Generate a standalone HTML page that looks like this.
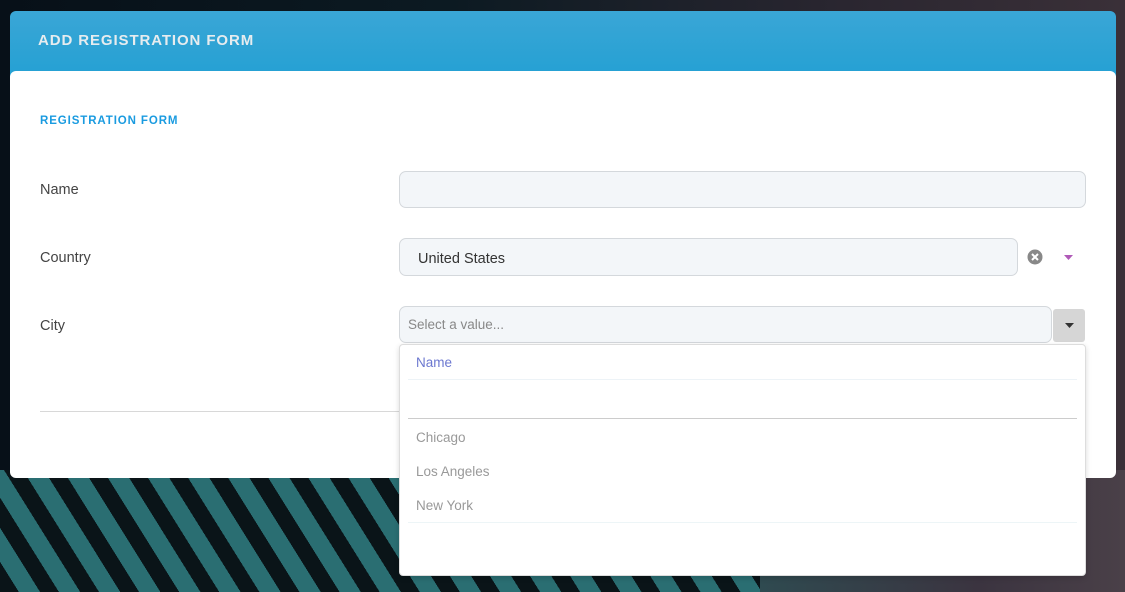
<!DOCTYPE html>
<html><head><style>
*{box-sizing:border-box;margin:0;padding:0}
body{width:1125px;height:592px;overflow:hidden;position:relative;font-family:"Liberation Sans",sans-serif;
background:linear-gradient(90deg,#071018 0%,#0c1a22 40%,#2a2630 75%,#3a3038 100%);}
.stripes{position:absolute;left:0;top:470px;width:760px;height:122px;
background:repeating-linear-gradient(58deg,#0a1418 0 16px,#2a6e72 16px 34px);}
.rbg{position:absolute;left:760px;top:470px;width:365px;height:122px;background:linear-gradient(90deg,#2f4a50,#3b3440 60%,#4a4048)}
.hdr{position:absolute;left:10px;top:11px;width:1106px;height:70px;border-radius:6px 6px 0 0;
background:linear-gradient(180deg,#3aa6d6,#23a0d3);}
.hdr span{position:absolute;left:28px;top:21px;color:#e6ecef;font-weight:bold;font-size:15px;letter-spacing:.9px}
.card{position:absolute;left:10px;top:71px;width:1106px;height:407px;background:#fff;border-radius:6px}
.sec{position:absolute;left:40px;top:115px;color:#1a9be0;font-weight:bold;font-size:11.5px;letter-spacing:.9px}
.lbl{position:absolute;left:40px;color:#444;font-size:14.5px}
.inp{position:absolute;left:399px;background:#f3f6f9;border:1px solid #d4d8dc;border-radius:7px}
.hr{position:absolute;left:40px;top:411px;width:360px;height:1px;background:#d8d8d8}
.dd{position:absolute;left:399px;top:344px;width:687px;height:232px;background:#fff;border:1px solid #ddd;border-radius:4px;box-shadow:0 2px 6px rgba(0,0,0,.15)}
.dd div{position:absolute;left:16px;font-size:13.5px;color:#999}
</style></head><body>
<div class="stripes"></div><div class="rbg"></div>
<div class="hdr"><span>ADD REGISTRATION FORM</span></div>
<div class="card"></div>
<div class="sec">REGISTRATION FORM</div>
<div class="lbl" style="top:182px">Name</div>
<div class="inp" style="top:171px;width:687px;height:37px"></div>
<div class="lbl" style="top:250px">Country</div>
<div class="inp" style="top:238px;width:619px;height:38px;font-size:14.5px;color:#333;padding:12px 18px">United States</div>
<svg style="position:absolute;left:1027px;top:249px" width="16" height="16" viewBox="0 0 16 16"><circle cx="8" cy="8" r="7.5" fill="#888"/><path d="M5 5L11 11M11 5L5 11" stroke="#fff" stroke-width="2"/></svg>
<svg style="position:absolute;left:1064px;top:255px" width="9" height="5"><path d="M0 0H9L4.5 5Z" fill="#b05ab8"/></svg>
<div class="lbl" style="top:318px">City</div>
<div class="inp" style="top:306px;width:653px;height:37px;font-size:13.5px;color:#888;padding:10px 8px">Select a value...</div>
<div style="position:absolute;left:1053px;top:309px;width:32px;height:33px;background:#d6d6d6;border-radius:3px"></div>
<svg style="position:absolute;left:1065px;top:323px" width="9" height="5"><path d="M0 0H9L4.5 5Z" fill="#333"/></svg>
<div class="hr"></div>
<div class="dd">
<div style="top:10px;color:#6c78d0">Name</div>
<span style="position:absolute;left:8px;right:8px;top:34px;height:1px;background:#edf3f7"></span>
<span style="position:absolute;left:8px;right:8px;top:73px;height:1px;background:#ccc"></span>
<div style="top:85px">Chicago</div>
<div style="top:119px">Los Angeles</div>
<div style="top:153px">New York</div>
<span style="position:absolute;left:8px;right:8px;top:177px;height:1px;background:#edf5f7"></span>
</div>
</body></html>
